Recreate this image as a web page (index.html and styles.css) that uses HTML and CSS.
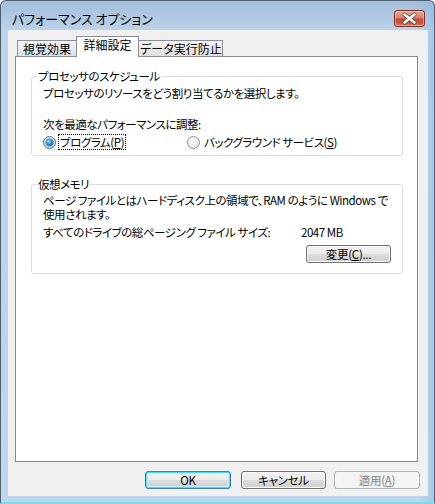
FILE: index.html
```html
<!DOCTYPE html>
<html lang="ja">
<head>
<meta charset="utf-8">
<title>パフォーマンス オプション</title>
<link rel="stylesheet" href="styles.css">
</head>
<body>
<div class="window">
  <div class="titlebar">
    <span class="title">パフォーマンス オプション</span>
    <button class="close" aria-label="閉じる">
      <svg width="29" height="15" viewBox="0 0 29 15">
        <path d="M9.5 3.5 L19.5 11.5 M19.5 3.5 L9.5 11.5" stroke="#4a4a4a" stroke-width="4.2" stroke-linecap="round" fill="none" opacity="0.75"/>
        <path d="M9.5 3.5 L19.5 11.5 M19.5 3.5 L9.5 11.5" stroke="#ffffff" stroke-width="2.4" stroke-linecap="round" fill="none"/>
      </svg>
    </button>
  </div>
  <div class="client">
    <div class="tabs">
      <div class="tab t1">視覚効果</div>
      <div class="tab selected">詳細設定</div>
      <div class="tab t3">データ実行防止</div>
    </div>
    <div class="panel">
      <div class="group g1">
        <div class="group-title">プロセッサのスケジュール</div>
        <p class="line l1">プロセッサのリソースをどう割り当てるかを選択します。</p>
        <p class="line l2">次を最適なパフォーマンスに調整:</p>
        <div class="radios">
          <label class="radio first"><span class="dot checked"></span><span class="focus">プログラム(<u>P</u>)</span></label>
          <label class="radio"><span class="dot"></span><span class="rtext">バックグラウンド サービス(<u>S</u>)</span></label>
        </div>
      </div>
      <div class="group g2">
        <div class="group-title">仮想メモリ</div>
        <p class="line m1">ページ ファイルとはハードディスク上の領域で、RAM のように Windows で<br>使用されます。</p>
        <div class="sizerow">
          <span class="sizelabel">すべてのドライブの総ページング ファイル サイズ:</span>
          <span class="sizeval">2047 MB</span>
        </div>
        <div class="changerow">
          <button class="btn change">変更(<u>C</u>)...</button>
        </div>
      </div>
    </div>
    <div class="buttons">
      <button class="btn ok">OK</button>
      <button class="btn cancel">キャンセル</button>
      <button class="btn apply" disabled>適用(<u>A</u>)</button>
    </div>
  </div>
</div>
</body>
</html>
```

FILE: styles.css
```css
html, body {
  margin: 0;
  padding: 0;
  background: #ffffff;
}

body {
  font-family: "Noto Sans CJK JP", "Noto Sans", sans-serif;
  font-size: 12px;
  font-feature-settings: "palt";
  color: #000;
}

.window {
  width: 435px;
  height: 504px;
  box-sizing: border-box;
  border: 1px solid #4f5f70;
  border-bottom: 2px solid #7fd9ea;
  border-radius: 6px 6px 0 0;
  background:
    linear-gradient(to right, rgba(255,255,255,0) 96%, rgba(120,180,235,0.35) 100%),
    linear-gradient(to bottom, #a3bedb 0px, #b2c9e3 18px, #bcd3ea 30px, #bed6eb 100%);
  display: flex;
  flex-direction: column;
  overflow: hidden;
}

.titlebar {
  height: 29px;
  flex: none;
  display: flex;
  justify-content: space-between;
  align-items: flex-start;
  padding: 0 9px 0 11px;
}

.title {
  margin-top: 10px;
  font-size: 13px;
  line-height: 16px;
  color: #000;
}

.close {
  margin-top: 9px;
  width: 31px;
  height: 17px;
  padding: 0;
  border: 1px solid #7b3126;
  border-radius: 3px;
  background: linear-gradient(to bottom, #e8a899 0%, #d9806e 45%, #c54a32 55%, #c9553d 80%, #d9826c 100%);
  box-shadow: inset 0 0 0 1px rgba(255,220,210,0.45);
  display: flex;
  align-items: center;
  justify-content: center;
}

.close svg {
  display: block;
}

.client {
  margin-left: 7px;
  width: 420px;
  height: 466px;
  box-sizing: border-box;
  background: #f0f0f0;
  padding-top: 6px;
  display: flex;
  flex-direction: column;
}

.tabs {
  height: 20px;
  margin-left: 9px;
  display: flex;
  align-items: flex-end;
}

.tab {
  box-sizing: border-box;
  height: 16px;
  border: 1px solid #898c95;
  border-bottom: none;
  background: linear-gradient(to bottom, #f4f4f4 0%, #ebebeb 50%, #dfdfdf 100%);
  text-align: center;
  line-height: 15px;
  font-size: 12px;
  white-space: nowrap;
}

.t1 {
  width: 61px;
  padding-right: 1px;
}

.selected {
  width: 63px;
  height: 21px;
  margin-left: -2px;
  margin-bottom: -1px;
  background: #ffffff;
  line-height: 16px;
  position: relative;
  z-index: 2;
}

.t3 {
  width: 86px;
  margin-left: -2px;
  padding-left: 2px;
}

.panel {
  position: relative;
  z-index: 1;
  margin-left: 7px;
  width: 403px;
  height: 406px;
  box-sizing: border-box;
  border: 1px solid #898c95;
  background: #ffffff;
  padding: 0 14px 0 15px;
  font-size: 11.5px;
  letter-spacing: -0.45px;
}

.group {
  box-sizing: border-box;
  border: 1px solid #d5dfe5;
  border-radius: 3px;
  padding: 0 11px;
}

.g1 {
  margin-top: 19px;
  height: 80px;
}

.g2 {
  margin-top: 28px;
  height: 90px;
}

.group-title {
  width: max-content;
  margin: -8px 0 0 -6px;
  padding: 0 1px;
  background: #ffffff;
  line-height: 14px;
}

.line {
  margin: 0;
  line-height: 14px;
}

.l1 { margin-top: 3px; }
.l2 { margin-top: 17px; }

.radios {
  margin-top: 4px;
  display: flex;
  line-height: 14px;
}

.radio {
  display: flex;
  align-items: center;
}

.radio.first {
  width: 144px;
}

.dot {
  box-sizing: border-box;
  width: 13px;
  height: 13px;
  border-radius: 50%;
  border: 1px solid #8f9193;
  background: radial-gradient(circle at 40% 35%, #ffffff 0%, #f0f0f0 45%, #d6d6d6 100%);
  margin-right: 3px;
  display: flex;
  align-items: center;
  justify-content: center;
}

.dot.checked {
  border-color: #3b6a8e;
}

.dot.checked::after {
  content: "";
  width: 7px;
  height: 7px;
  border-radius: 50%;
  background: radial-gradient(circle at 40% 35%, #9fe0ff 0%, #2f8fd6 45%, #0d4f8a 100%);
  box-shadow: 0 0 0 0.5px #1a4e78;
}

.focus {
  outline: 1px dotted #000;
  outline-offset: 0px;
  padding: 0 1px;
}

.rtext {
  padding-left: 1px;
}

.m1 {
  margin-top: 2px;
  white-space: nowrap;
}

.sizerow {
  margin-top: 4px;
  display: flex;
  line-height: 14px;
}

.sizelabel {
  width: 258px;
  flex: none;
}

.changerow {
  margin-top: 6px;
  display: flex;
  justify-content: flex-end;
}

.btn {
  box-sizing: border-box;
  height: 18px;
  padding: 0;
  font-family: inherit;
  font-size: 11.5px;
  letter-spacing: -0.3px;
  font-feature-settings: "palt";
  line-height: 14px;
  color: #000;
  border: 1px solid #707070;
  border-radius: 3px;
  background: linear-gradient(to bottom, #f2f2f2 0%, #ebebeb 50%, #dddddd 50%, #cfcfcf 100%);
  box-shadow: inset 0 0 0 1px #fbfbfb;
}

.change {
  width: 85px;
}

.buttons {
  margin-top: 9px;
  padding-right: 8px;
  display: flex;
  justify-content: flex-end;
}

.ok {
  width: 86px;
  border-color: #3c7fb1;
  box-shadow: inset 0 0 0 1px #48d8fb, inset 0 0 0 2px #c7effc;
}

.cancel {
  width: 85px;
  margin-left: 10px;
}

.apply {
  width: 86px;
  margin-left: 8px;
  border-color: #adb2b5;
  background: #f4f4f4;
  box-shadow: none;
  color: #838383;
}
```
